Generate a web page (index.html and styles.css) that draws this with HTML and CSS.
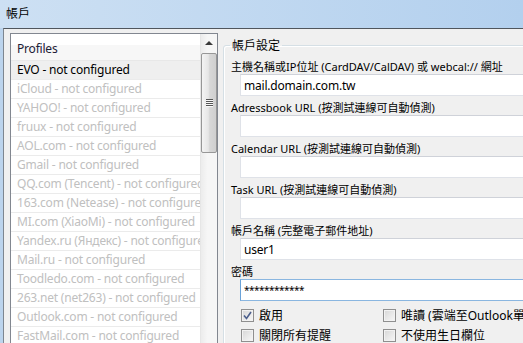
FILE: index.html
```html
<!DOCTYPE html>
<html lang="zh-Hant">
<head>
    <meta charset="UTF-8">
    <title>帳戶</title>
    <link rel="stylesheet" href="styles.css">
</head>
<body>
    <div class="window">
        <div class="titlebar">帳戶</div>

        <div class="content">
            <!-- Lista de perfis -->
            <div class="profiles">
                <div class="profile-list">
                    <div class="list-head">Profiles</div>
                    <ul class="rows">
                        <li class="selected">EVO - not configured</li>
                        <li>iCloud - not configured</li>
                        <li>YAHOO! - not configured</li>
                        <li>fruux - not configured</li>
                        <li>AOL.com - not configured</li>
                        <li>Gmail - not configured</li>
                        <li>QQ.com (Tencent) - not configured</li>
                        <li>163.com (Netease) - not configured</li>
                        <li>MI.com (XiaoMi) - not configured</li>
                        <li>Yandex.ru (Яндекс) - not configured</li>
                        <li>Mail.ru - not configured</li>
                        <li>Toodledo.com - not configured</li>
                        <li>263.net (net263) - not configured</li>
                        <li>Outlook.com - not configured</li>
                        <li>FastMail.com - not configured</li>
                    </ul>
                </div>
                <div class="scrollbar">
                    <div class="scroll-up"></div>
                    <div class="thumb"><span class="grip"></span></div>
                </div>
            </div>

            <!-- Configurações da conta -->
            <fieldset class="settings">
                <legend>帳戶設定</legend>

                <div class="field">
                    <label for="host">主機名稱或IP位址 (CardDAV/CalDAV) 或 webcal:// 網址</label>
                    <input type="text" id="host" value="mail.domain.com.tw">
                </div>
                <div class="field">
                    <label for="addressbook">Adressbook URL (按測試連線可自動偵測)</label>
                    <input type="text" id="addressbook">
                </div>
                <div class="field">
                    <label for="calendar">Calendar URL (按測試連線可自動偵測)</label>
                    <input type="text" id="calendar">
                </div>
                <div class="field">
                    <label for="task">Task URL (按測試連線可自動偵測)</label>
                    <input type="text" id="task">
                </div>
                <div class="field">
                    <label for="user">帳戶名稱 (完整電子郵件地址)</label>
                    <input type="text" id="user" value="user1">
                </div>
                <div class="field">
                    <label for="password">密碼</label>
                    <input type="text" id="password" class="focused secret" value="************">
                </div>

                <div class="options">
                    <label class="check">
                        <span class="box">
                            <svg width="9" height="9" viewBox="0 0 9 9"><path d="M1 4.5 L3.5 7.5 L8 1" fill="none" stroke="#4c5f8c" stroke-width="1.6"/></svg>
                        </span>
                        啟用
                    </label>
                    <label class="check"><span class="box"></span>唯讀 (雲端至Outlook單向同步)</label>
                    <label class="check"><span class="box"></span>關閉所有提醒</label>
                    <label class="check"><span class="box"></span>不使用生日欄位</label>
                </div>
            </fieldset>
        </div>
    </div>
</body>
</html>
```

FILE: styles.css
```css
/* Geral */
* {
    box-sizing: border-box;
}

body {
    margin: 0;
    font-family: "Noto Sans", "Noto Sans CJK TC", sans-serif;
    font-size: 12px;
    color: #000;
    background-color: #bcd4ed;
}

/* Janela */
.window {
    width: 523px;
    height: 343px;
    overflow: hidden;
    display: flex;
    flex-direction: column;
    background-color: #bcd4ed;
}

.titlebar {
    flex: none;
    height: 28px;
    line-height: 28px;
    padding-left: 6px;
    background: linear-gradient(to right, #cde0f3, #b3d0ee);
}

.content {
    flex: 1;
    min-height: 0;
    display: flex;
    gap: 5px;
    margin-left: 3px;
    padding: 4px 0 0 6px;
    background-color: #f0f0f0;
    border-top: 1px solid #50565d;
    border-left: 1px solid #7d8690;
}

/* Lista de perfis */
.profiles {
    flex: none;
    width: 208px;
    height: 330px;
    display: flex;
    background-color: white;
    border: 1px solid #828790;
}

.profile-list {
    flex: 1;
    min-width: 0;
    overflow: hidden;
    letter-spacing: -0.2px;
}

.list-head {
    height: 27px;
    padding: 7px 0 0 6px;
    line-height: 15px;
    color: #1b2036;
    background: linear-gradient(#fff 11px, #f7f7f7 11px);
    border-bottom: 1px solid #e8e8e8;
}

.rows {
    list-style: none;
    margin: 0;
    padding: 0;
}

.rows li {
    height: 19px;
    line-height: 18px;
    padding-left: 6px;
    white-space: nowrap;
    overflow: hidden;
    color: #c0c0c0;
    border-bottom: 1px solid #ebebeb;
}

.rows li.selected {
    background-color: #efefef;
    color: #000;
}

/* Barra de rolagem */
.scrollbar {
    flex: none;
    width: 17px;
    background: linear-gradient(to right, #ececec, #f6f6f6 40%, #f6f6f6);
    border-left: 1px solid #e6e6e6;
}

.scroll-up {
    height: 18px;
    display: flex;
    align-items: center;
    justify-content: center;
}

.scroll-up::before {
    content: "";
    width: 0;
    height: 0;
    border-left: 4px solid transparent;
    border-right: 4px solid transparent;
    border-bottom: 4px solid #3a3a3a;
}

.thumb {
    height: 100px;
    margin: 1px 0 0 0;
    display: flex;
    align-items: center;
    justify-content: center;
    border: 1px solid #979797;
    border-radius: 2px;
    background: linear-gradient(to right, #f4f4f4, #e6e6e6 45%, #d7d7d7 55%, #cfcfcf);
}

.grip {
    width: 7px;
    height: 8px;
    background: repeating-linear-gradient(#555 0 1px, #f8f8f8 1px 2px);
}

/* Configurações */
.settings {
    flex: none;
    width: 330px;
    height: 320px;
    margin: 5px 0 0 0;
    padding: 6px 0 0 6px;
    min-width: 0;
    border: 1px solid #d5dfe5;
    border-radius: 3px;
    box-shadow: inset 1px 1px 0 #fff;
}

.settings legend {
    padding: 0 2px;
    line-height: 15px;
}

.field {
    margin-bottom: 4px;
}

.field label {
    display: block;
    font-size: 11px;
    line-height: 15px;
    padding-left: 1px;
    white-space: nowrap;
}

.field input {
    display: block;
    width: 320px;
    height: 22px;
    margin-left: 10px;
    padding: 0 3px;
    font: inherit;
    letter-spacing: -0.2px;
    color: #000;
    background-color: white;
    border: 1px solid #dfe2e8;
    border-top-color: #cfd2d9;
    outline: none;
}

.field input.focused {
    border-color: #8ab6e0;
    border-left-color: #6aa2d8;
}

/* Senha mostrada com asteriscos */
.field input.secret {
    font-size: 10px;
    letter-spacing: -0.5px;
}

/* Caixas de seleção */
.options {
    display: grid;
    grid-template-columns: 142px auto;
    margin-left: 11px;
}

.check {
    height: 20px;
    display: flex;
    align-items: center;
    gap: 5px;
    white-space: nowrap;
}

.box {
    flex: none;
    width: 13px;
    height: 13px;
    display: flex;
    align-items: center;
    justify-content: center;
    border: 1px solid #8f8f8f;
    background: linear-gradient(135deg, #d6d6d6, #f8f8f8);
    box-shadow: inset 0 0 0 1px #f2f2f2;
}
```
